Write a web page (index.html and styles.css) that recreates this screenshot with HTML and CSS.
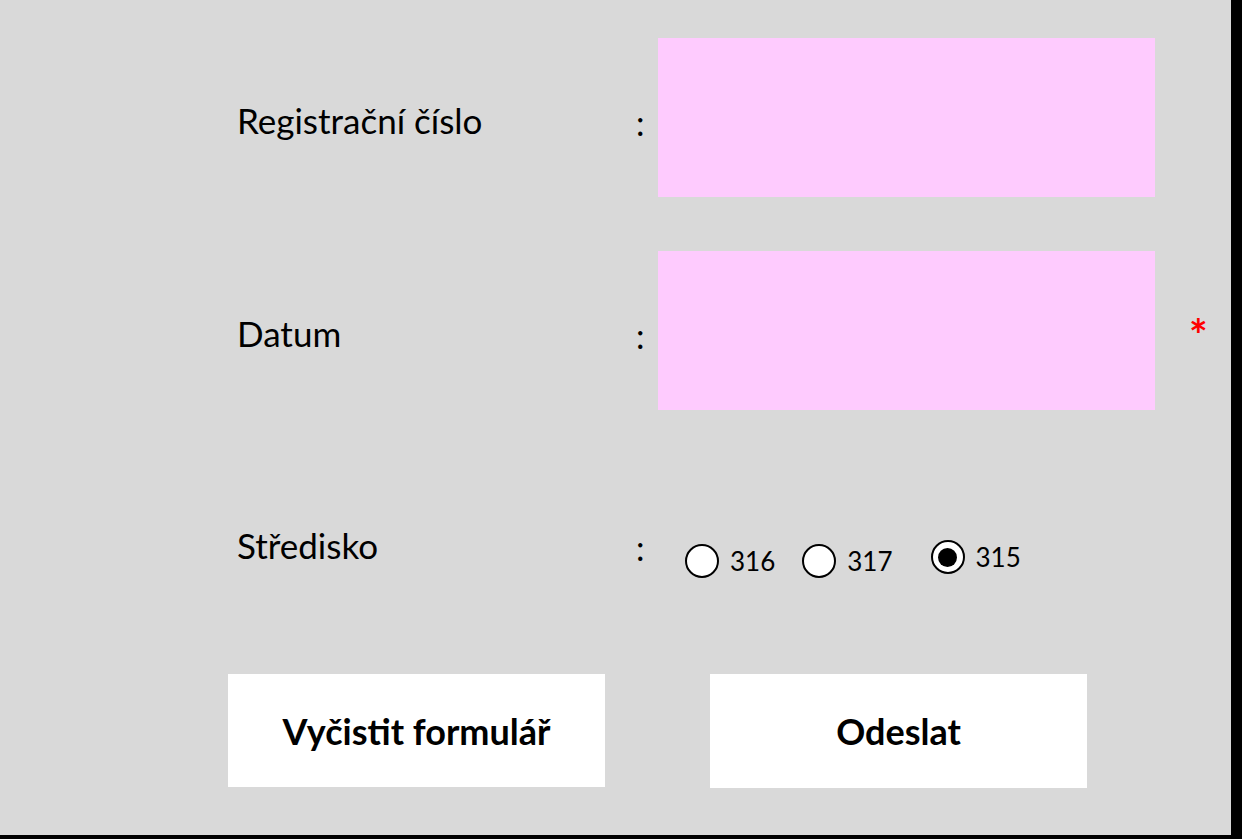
FILE: index.html
```html
<!DOCTYPE html>
<html lang="cs">
<head>
<meta charset="utf-8">
<title>Formulář</title>
<link rel="stylesheet" href="styles.css">
</head>
<body>
<main class="sheet">
  <div class="row row-field">
    <div class="label">Registrační číslo</div>
    <div class="colon">:</div>
    <div class="field"></div>
    <div class="mark"></div>
  </div>
  <div class="row row-field row-second">
    <div class="label">Datum</div>
    <div class="colon">:</div>
    <div class="field"></div>
    <div class="mark"><span class="star">*</span></div>
  </div>
  <div class="row row-radio">
    <div class="label">Středisko</div>
    <div class="colon">:</div>
    <div class="radios">
      <label class="opt opt-a"><input type="radio" name="stredisko" class="radio"><span>316</span></label>
      <label class="opt opt-b"><input type="radio" name="stredisko" class="radio"><span>317</span></label>
      <label class="opt opt-c"><input type="radio" name="stredisko" class="radio" checked><span>315</span></label>
    </div>
  </div>
  <div class="buttons">
    <button class="btn btn-clear" type="button">Vyčistit formulář</button>
    <button class="btn btn-send" type="button">Odeslat</button>
  </div>
</main>
</body>
</html>
```
FILE: styles.css
```css
html, body {
  margin: 0;
  padding: 0;
  background: #000;
}

body {
  width: 1242px;
  height: 839px;
  overflow: hidden;
  font-family: Lato, "Open Sans", sans-serif;
  color: #000;
}

.sheet {
  width: 1231px;
  height: 835px;
  background: #d9d9d9;
  box-sizing: border-box;
  padding-top: 38px;
  display: flex;
  flex-direction: column;
}

.row {
  display: grid;
  grid-template-columns: 399px 22px 497px 1fr;
  padding-left: 237px;
  align-items: center;
}

.row-field {
  height: 159px;
}

.row-second {
  margin-top: 54px;
}

.label {
  font-size: 35px;
  line-height: 40px;
  padding-top: 4px;
}

.colon {
  font-size: 34px;
  line-height: 40px;
  padding-top: 10px;
}

.field {
  height: 159px;
  background: #fecbfe;
}

.mark {
  padding-left: 34px;
}

.star {
  color: #ff0000;
  font-weight: 700;
  font-size: 44px;
  line-height: 40px;
  display: inline-block;
  padding-top: 6px;
}

.row-radio {
  margin-top: 100px;
  height: 70px;
}

.row-radio .label {
  padding-top: 0;
}

.row-radio .colon {
  padding-top: 6px;
}

.radios {
  display: flex;
  align-items: center;
  padding-top: 32px;
}

.opt {
  display: flex;
  align-items: center;
  gap: 11px;
  font-size: 26px;
  line-height: 30px;
}

.opt-a { margin-left: 27px; }
.opt-b { margin-left: 27px; }
.opt-c { margin-left: 38px; position: relative; top: -4px; }

.radio {
  appearance: none;
  -webkit-appearance: none;
  margin: 0;
  width: 34px;
  height: 34px;
  border-radius: 50%;
  border: 2px solid #000;
  background: #fff;
  box-sizing: border-box;
  display: grid;
  place-items: center;
}

.radio:checked::after {
  content: "";
  width: 19px;
  height: 19px;
  border-radius: 50%;
  background: #000;
}

.buttons {
  margin-top: 94px;
  padding-left: 228px;
  display: flex;
  gap: 105px;
}

.btn {
  width: 377px;
  height: 113px;
  border: none;
  background: #fff;
  font-family: Lato, "Open Sans", sans-serif;
  font-weight: 700;
  font-size: 36px;
  color: #000;
  padding: 0;
}

.btn-send {
  height: 114px;
}
```
